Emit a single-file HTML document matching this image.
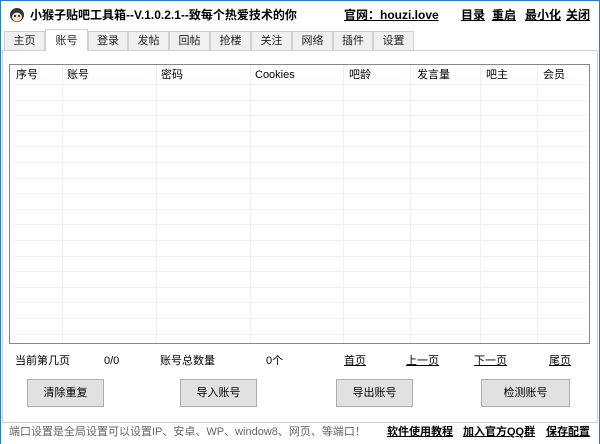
<!DOCTYPE html><html><head><meta charset="utf-8"><style>
body{margin:0;width:600px;height:444px;background:#fff;font-family:"Liberation Sans","Noto Sans CJK SC",sans-serif;font-size:11px;color:#000;position:relative;overflow:hidden}
.a{position:absolute;white-space:nowrap;line-height:16px}
.tab{position:absolute;top:31px;height:19px;border:1px solid #d0d0d0;border-bottom:none;background:#f0f0f0;text-align:center;line-height:19px;box-sizing:border-box;color:#222}
.b{position:absolute;top:379px;height:28px;width:77px;background:#e1e1e1;border:1px solid #adadad;box-sizing:border-box;text-align:center;line-height:26px}
u{text-decoration:underline}
.ln{position:absolute;background:#eef0f2}
</style></head><body>
<div class="a" style="left:0;top:0;width:1px;height:444px;background:#2a7ad0"></div>
<div class="a" style="left:599px;top:0;width:1px;height:444px;background:#2a7ad0"></div>
<div class="a" style="left:0;top:0;width:600px;height:1px;background:#2a7ad0"></div>
<svg class="a" style="left:9px;top:7px" width="16" height="16" viewBox="0 0 16 16"><circle cx="8" cy="8" r="7" fill="#333"/><ellipse cx="8" cy="10" rx="5" ry="4.5" fill="#f4e1c8"/><circle cx="6" cy="9" r="1" fill="#000"/><circle cx="10" cy="9" r="1" fill="#000"/></svg>
<div class="a" style="left:30px;top:7px;font-weight:bold;font-size:12px">小猴子贴吧工具箱--V.1.0.2.1--致每个热爱技术的你</div>
<div class="a" style="left:344px;top:7px;font-weight:bold;font-size:12px"><u>官网：houzi.love</u></div>
<div class="a" style="left:461px;top:7px;font-weight:bold;font-size:12px"><u>目录</u></div>
<div class="a" style="left:492px;top:7px;font-weight:bold;font-size:12px"><u>重启</u></div>
<div class="a" style="left:525px;top:7px;font-weight:bold;font-size:12px"><u>最小化</u></div>
<div class="a" style="left:566px;top:7px;font-weight:bold;font-size:12px"><u>关闭</u></div>
<div class="a" style="left:2px;top:50px;width:596px;height:373px;border:1px solid #d0d0d0;box-sizing:border-box"></div>
<div class="tab" style="left:4px;width:41px">主页</div>
<div class="tab" style="left:45px;top:29px;height:22px;width:43px;background:#fff;line-height:22px">账号</div>
<div class="tab" style="left:88px;width:40px">登录</div>
<div class="tab" style="left:128px;width:41px">发帖</div>
<div class="tab" style="left:169px;width:41px">回帖</div>
<div class="tab" style="left:210px;width:41px">抢楼</div>
<div class="tab" style="left:251px;width:41px">关注</div>
<div class="tab" style="left:292px;width:41px">网络</div>
<div class="tab" style="left:333px;width:40px">插件</div>
<div class="tab" style="left:373px;width:41px">设置</div>
<div class="a" style="left:9px;top:64px;width:581px;height:280px;border:1px solid #828790;box-sizing:border-box"></div>
<div id="g"></div>
<div class="a" style="left:16px;top:67px">序号</div>
<div class="a" style="left:67px;top:67px">账号</div>
<div class="a" style="left:161px;top:67px">密码</div>
<div class="a" style="left:255px;top:67px">Cookies</div>
<div class="a" style="left:349px;top:67px">吧龄</div>
<div class="a" style="left:417px;top:67px">发言量</div>
<div class="a" style="left:486px;top:67px">吧主</div>
<div class="a" style="left:543px;top:67px">会员</div>
<div class="a" style="left:15px;top:353px">当前第几页</div>
<div class="a" style="left:104px;top:353px">0/0</div>
<div class="a" style="left:160px;top:353px">账号总数量</div>
<div class="a" style="left:266px;top:353px">0个</div>
<div class="a" style="left:344px;top:353px"><u>首页</u></div>
<div class="a" style="left:406px;top:353px"><u>上一页</u></div>
<div class="a" style="left:474px;top:353px"><u>下一页</u></div>
<div class="a" style="left:549px;top:353px"><u>尾页</u></div>
<div class="b" style="left:27px">清除重复</div>
<div class="b" style="left:180px">导入账号</div>
<div class="b" style="left:336px">导出账号</div>
<div class="b" style="left:481px;width:89px">检测账号</div>
<div class="a" style="left:9px;top:424px;color:#666">端口设置是全局设置可以设置IP、安卓、WP、window8、网页、等端口！</div>
<div class="a" style="left:387px;top:424px;font-weight:bold"><u>软件使用教程</u></div>
<div class="a" style="left:463px;top:424px;font-weight:bold"><u>加入官方QQ群</u></div>
<div class="a" style="left:546px;top:424px;font-weight:bold"><u>保存配置</u></div>
<script>
var g=document.getElementById('g'),h='';
[62,156,250,343,410,480,537].forEach(function(x){h+='<div class="ln" style="left:'+x+'px;top:65px;width:1px;height:278px"></div>'});
for(var y=84;y<343;y+=15.6)h+='<div class="ln" style="left:12px;top:'+Math.round(y)+'px;width:576px;height:1px"></div>';
g.innerHTML=h;
</script>
</body></html>
